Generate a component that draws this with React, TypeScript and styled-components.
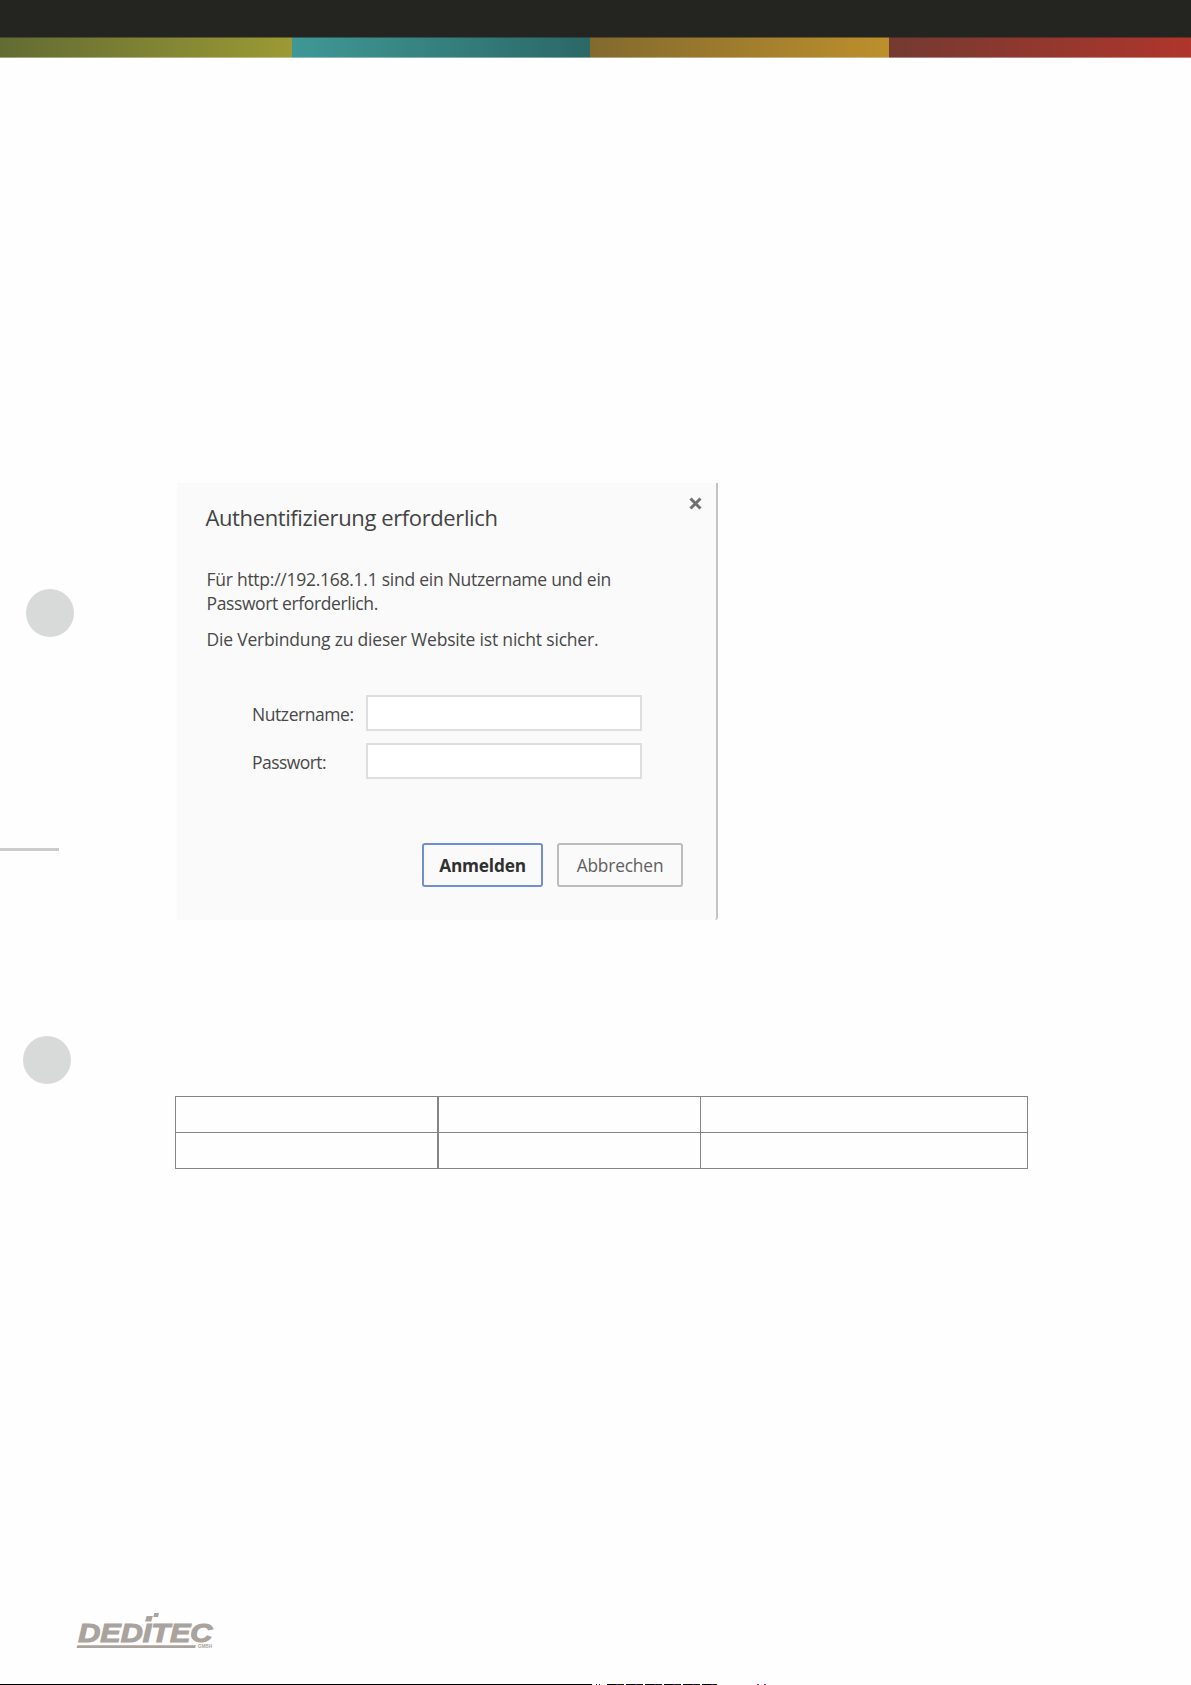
import React from "react";
import styled, { createGlobalStyle } from "styled-components";

const Global = createGlobalStyle`
  * { box-sizing: border-box; }
  body { margin: 0; background: #fff; font-family: "Open Sans", "Noto Sans", sans-serif; }
`;

const Page = styled.div`
  width: 1191px;
  height: 1685px;
  display: flex;
  flex-direction: column;
  background: #fefefe;
  overflow: hidden;
`;

const TopBar = styled.header`
  height: 37px;
  flex: none;
  background: #242421;
`;

const Stripes = styled.div`
  height: 21px;
  flex: none;
  display: grid;
  grid-template-columns: 291.5px 298px 299px 302.5px;
`;

const Stripe = styled.div<{ $from: string; $to: string }>`
  background: linear-gradient(90deg, ${(p) => p.$from}, ${(p) => p.$to});
  box-shadow: inset 0 1px rgba(36, 36, 33, 0.5), inset 0 -1px rgba(255, 255, 255, 0.38);
`;

const Body = styled.main`
  flex: 1;
  display: grid;
  grid-template-columns: 175px 853px;
`;

const Margin = styled.aside`
  display: flex;
  flex-direction: column;
  align-items: flex-start;
  padding-top: 531px;
`;

const Hole = styled.div<{ $left: number }>`
  width: 48px;
  height: 48px;
  margin-left: ${(p) => p.$left}px;
  border-radius: 50%;
  background: #d8dada;
`;

const FoldMark = styled.div`
  width: 59px;
  height: 3px;
  margin: 211px 0 185px;
  background: #cbcbcb;
`;

const Content = styled.div`
  padding-top: 425px;
`;

const Dialog = styled.section`
  width: 541px;
  height: 437px;
  margin-left: 2px;
  padding: 14px 14px 0 28px;
  background: #fafafa;
  border-right: 2px solid #c4c4c4;
  border-radius: 0 0 3px 1px;
  color: #484848;
`;

const TitleRow = styled.div`
  display: flex;
  justify-content: space-between;
  height: 62px;
`;

const Title = styled.h1`
  margin: 5px 0 0 0.5px;
  font-size: 22px;
  line-height: 30px;
  font-weight: 400;
  letter-spacing: -0.39px;
  color: #444;
  white-space: nowrap;
`;

const Close = styled.button`
  width: 13px;
  height: 13px;
  padding: 0;
  border: 0;
  background: none;
  color: #707070;
  svg { display: block; }
`;

const Line = styled.p<{ $track: number; $gap?: number }>`
  margin: ${(p) => p.$gap ?? 0}px 0 0 1.5px;
  font-size: 17.5px;
  line-height: 24px;
  letter-spacing: ${(p) => p.$track}px;
  white-space: nowrap;
`;

const Form = styled.div`
  display: grid;
  grid-template-columns: 113.5px 276px;
  row-gap: 12px;
  margin: 44px 0 0 47px;
`;

const Label = styled.label<{ $track: number }>`
  font-size: 17.5px;
  line-height: 38px;
  height: 36px;
  letter-spacing: ${(p) => p.$track}px;
  white-space: nowrap;
`;

const Input = styled.input`
  width: 276px;
  height: 36px;
  border: 2px solid #dedede;
  background: #fff;
`;

const Actions = styled.div`
  display: flex;
  justify-content: flex-end;
  gap: 14px;
  margin: 64px 19px 0 0;
`;

const Button = styled.button<{ $primary?: boolean }>`
  width: ${(p) => (p.$primary ? 121 : 126)}px;
  height: 44px;
  padding: 0;
  border: 2px solid ${(p) => (p.$primary ? "#708fce" : "#bcbcbc")};
  border-radius: 3px;
  background: #fafafa;
  color: ${(p) => (p.$primary ? "#303030" : "#606060")};
  font: ${(p) => (p.$primary ? 700 : 400)} 17.3px "Open Sans", sans-serif;
  letter-spacing: ${(p) => (p.$primary ? -0.2 : -0.15)}px;
`;

const Table = styled.div`
  display: grid;
  grid-template-columns: 263px 262px 327px;
  grid-template-rows: 36px 36px;
  margin-top: 176px;
  border-top: 1px solid #858585;
  border-left: 1px solid #858585;
  width: 853px;
  height: 73px;
`;

const Cell = styled.div<{ $thick?: boolean }>`
  border-bottom: 1px solid #858585;
  border-right: ${(p) => (p.$thick ? 2 : 1)}px solid #858585;
`;

const Footer = styled.footer`
  height: 73px;
  flex: none;
  padding-left: 70px;
  svg { display: block; }
`;

const BottomRule = styled.div`
  height: 1px;
  flex: none;
  background: linear-gradient(#000, #000) 0 0 / 592px 1px no-repeat,
    repeating-linear-gradient(90deg, #000 0 9px, #402080 9px 11px, #111 11px 17px, #fff 17px 19px) 607px 0 / 110px 1px no-repeat,
    linear-gradient(#224, #224) 596px 0 / 1px 1px no-repeat,
    linear-gradient(#224, #224) 599px 0 / 1px 1px no-repeat,
    linear-gradient(#a36, #a36) 757px 0 / 2px 1px no-repeat,
    linear-gradient(#a36, #a36) 764px 0 / 2px 1px no-repeat;
`;

function Logo() {
  return (
    <svg width="150" height="50" viewBox="70 1611 150 50" fill="#aaa29d" stroke="none">
      <text x="78.3" y="1641.7" fontFamily="Liberation Sans, Arial, sans-serif" fontWeight="700" fontStyle="italic" fontSize="25" stroke="#aaa29d" strokeWidth="1.1" textLength="134" lengthAdjust="spacingAndGlyphs">DEDITEC</text>
      <path d="M146.6 1616h6.2l-1.5 5.5h-6.2zM154.3 1613h4.7l-1 3.9h-4.7zM77.4 1645.2h118.5l-.8 2.9H76.6z" />
      <text x="198" y="1648.3" fontFamily="Liberation Sans, Arial, sans-serif" fontWeight="700" fontSize="4.6" textLength="14">GMBH</text>
    </svg>
  );
}

export default function App() {
  return (
    <Page>
      <Global />
      <TopBar />
      <Stripes>
        <Stripe $from="#626b33" $to="#9b9a34" />
        <Stripe $from="#3f9896" $to="#2b6866" />
        <Stripe $from="#826a2e" $to="#bd8f2c" />
        <Stripe $from="#733a31" $to="#b0352c" />
      </Stripes>
      <Body>
        <Margin>
          <Hole $left={26.4} />
          <FoldMark />
          <Hole $left={23} />
        </Margin>
        <Content>
          <Dialog>
            <TitleRow>
              <Title>Authentifizierung erforderlich</Title>
              <Close aria-label="Schließen">
                <svg width="13" height="13" viewBox="0 0 13 13" stroke="currentColor" strokeWidth="3">
                  <path d="M1.5 1.5l10 10M11.5 1.5l-10 10" />
                </svg>
              </Close>
            </TitleRow>
            <Line $track={-0.26} $gap={8}>Für http://192.168.1.1 sind ein Nutzername und ein</Line>
            <Line $track={-0.38}>Passwort erforderlich.</Line>
            <Line $track={-0.19} $gap={12}>Die Verbindung zu dieser Website ist nicht sicher.</Line>
            <Form>
              <Label htmlFor="user" $track={-0.43}>Nutzername:</Label>
              <Input id="user" />
              <Label htmlFor="pass" $track={-0.55}>Passwort:</Label>
              <Input id="pass" type="password" />
            </Form>
            <Actions>
              <Button $primary>Anmelden</Button>
              <Button>Abbrechen</Button>
            </Actions>
          </Dialog>
          <Table>
            <Cell $thick /><Cell /><Cell />
            <Cell $thick /><Cell /><Cell />
          </Table>
        </Content>
      </Body>
      <Footer>
        <Logo />
      </Footer>
      <BottomRule />
    </Page>
  );
}
